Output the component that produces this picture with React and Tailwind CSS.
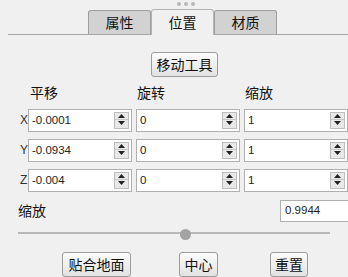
import React from "react";

const cjk = { fontFamily: '"Noto Sans CJK SC", "Noto Sans", sans-serif' };
const num = { fontFamily: '"Liberation Sans", Arial, sans-serif' };

const SpinButton = () => (
  <div className="absolute right-[2px] top-[2px] w-[15px] h-[17px] bg-[#e8e8e8] border border-[#bdbdbd] flex flex-col">
    <div className="h-1/2 flex items-end justify-center pb-[1px] border-b border-[#c8c8c8]">
      <svg width="7" height="4" viewBox="0 0 7 4">
        <path d="M3.5 0 L7 4 L0 4 Z" fill="#222" />
      </svg>
    </div>
    <div className="h-1/2 flex items-start justify-center pt-[1px]">
      <svg width="7" height="4" viewBox="0 0 7 4">
        <path d="M0 0 L7 0 L3.5 4 Z" fill="#222" />
      </svg>
    </div>
  </div>
);

const SpinInput = ({ value }) => (
  <div className="relative w-[104px] h-[23px] shrink-0 bg-white border border-[#b0b0b0] flex items-center pl-[3px]">
    <span className="text-[11.5px] text-[#222]" style={num}>{value}</span>
    <SpinButton />
  </div>
);

const Button = ({ children, className }) => (
  <div
    className={`h-[25px] shrink-0 border border-[#9c9c9c] rounded-[3px] bg-gradient-to-b from-[#fcfcfc] to-[#e2e2e2] flex items-center justify-center text-[14px] text-[#111] ${className}`}
    style={cjk}
  >
    {children}
  </div>
);

const rows = [
  { axis: "X", values: ["-0.0001", "0", "1"] },
  { axis: "Y", values: ["-0.0934", "0", "1"] },
  { axis: "Z", values: ["-0.004", "0", "1"] },
];

const App = () => {
  return (
    <div className="w-[348px] h-[277px] overflow-hidden bg-[#f0f0f0] flex flex-col" style={cjk}>
      {/* drag handle */}
      <div className="h-[10px] flex items-center gap-[3px] pl-[177px]">
        <div className="w-[4px] h-[4px] rounded-full bg-[#b8b8b8]" />
        <div className="w-[4px] h-[4px] rounded-full bg-[#b8b8b8]" />
        <div className="w-[4px] h-[4px] rounded-full bg-[#b8b8b8]" />
      </div>

      {/* tabs */}
      <div className="ml-[8px] h-[26px] border-b border-[#a6a6a6] flex items-end pl-[80px]">
        <div className="w-[63px] h-[24px] bg-[#d2d2d2] border border-b-0 border-[#9e9e9e] rounded-t-[3px] flex items-center justify-center text-[14px] text-[#111]">
          属性
        </div>
        <div className="w-[63px] h-[26px] -mb-px bg-[#f0f0f0] border border-b-0 border-[#b4b4b4] rounded-t-[3px] flex items-center justify-center text-[14px] text-[#111]">
          位置
        </div>
        <div className="w-[63px] h-[24px] bg-[#d2d2d2] border border-b-0 border-[#9e9e9e] rounded-t-[3px] flex items-center justify-center text-[14px] text-[#111]">
          材质
        </div>
      </div>

      {/* move tool */}
      <div className="mt-[17px] pl-[151px] flex">
        <Button className="w-[67px]">移动工具</Button>
      </div>

      {/* column labels */}
      <div className="mt-[7px] h-[17px] flex items-center pl-[30px] text-[14px] text-[#111]">
        <span className="w-[107px]">平移</span>
        <span className="w-[108px]">旋转</span>
        <span>缩放</span>
      </div>

      {/* xyz rows */}
      <div className="mt-[8px] flex flex-col gap-[7px]">
        {rows.map((r) => (
          <div key={r.axis} className="flex items-center pl-[20px]">
            <span className="w-[9px] text-[12px] text-[#333]" style={num}>{r.axis}</span>
            <div className="flex gap-[4px]">
              {r.values.map((v, i) => (
                <SpinInput key={i} value={v} />
              ))}
            </div>
          </div>
        ))}
      </div>

      {/* scale */}
      <div className="mt-[8px] h-[22px] flex items-center justify-between pl-[18px]">
        <span className="text-[14px] text-[#111]">缩放</span>
        <div className="w-[70px] h-[22px] -mr-[2px] bg-white border border-[#b0b0b0] flex items-center pl-[4px]">
          <span className="text-[11.5px] text-[#222]" style={num}>0.9944</span>
        </div>
      </div>

      {/* slider */}
      <div className="mt-[6px] h-[12px] relative ml-[18px] w-[312px] flex items-center">
        <div className="w-full h-[2px] bg-[#b8b8b8]" />
        <div className="absolute left-[162px] top-[1px] w-[11px] h-[11px] rounded-full bg-[#a3a3a3]" />
      </div>

      {/* bottom buttons */}
      <div className="mt-[14px] flex pl-[62px]">
        <Button className="w-[69px]">贴合地面</Button>
        <Button className="w-[39px] ml-[48px]">中心</Button>
        <Button className="w-[38px] ml-[52px]">重置</Button>
      </div>
    </div>
  );
};

export default App;
